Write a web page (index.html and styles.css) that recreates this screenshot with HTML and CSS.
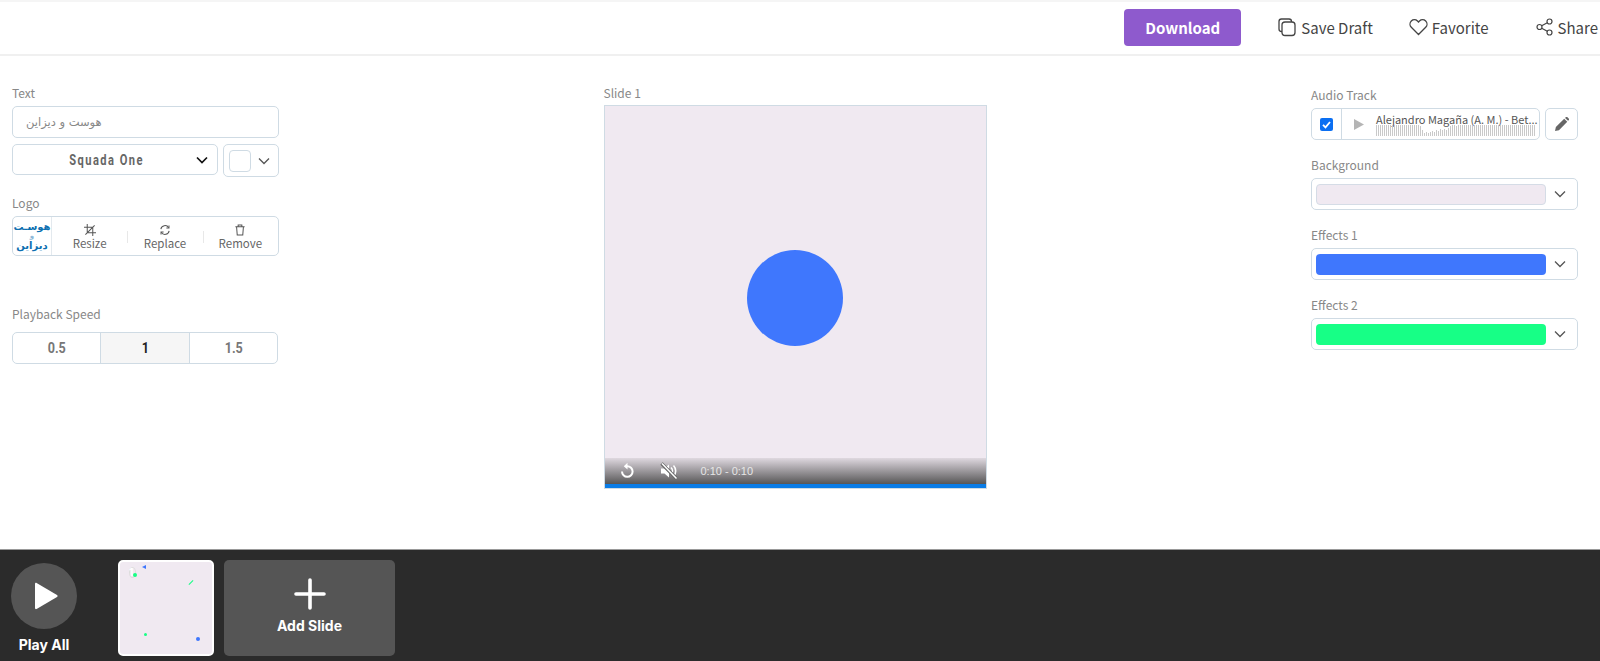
FILE: index.html
```html
<!DOCTYPE html>
<html lang="en">
<head>
  <meta charset="UTF-8">
  <meta name="viewport" content="width=device-width, initial-scale=1.0">
  <title>Slide Editor</title>
  <link rel="stylesheet" href="styles.css">
</head>
<body>
  <header class="topbar">
    <button class="download">Download</button>
    <a class="action">
      <svg width="20" height="20" viewBox="0 0 20 20" fill="none" stroke="#444" stroke-width="1.3"><path d="M5 14.5h-.5A2.5 2.5 0 0 1 2 12V4.500A2.500 2.500 0 0 1 4.500 2H12a2.500 2.500 0 0 1 2.500 2.500V5"/><rect x="5" y="5" width="13" height="13.500" rx="3"/></svg>
      Save Draft
    </a>
    <a class="action">
      <svg width="19" height="18" viewBox="0 0 19 18" fill="none" stroke="#444" stroke-width="1.3"><path d="M9.500 16.500 2.300 9.300a4.500 4.500 0 0 1 0-6.300 4.400 4.400 0 0 1 6.200 0l1 1 1-1a4.400 4.400 0 0 1 6.200 0 4.500 4.500 0 0 1 0 6.300z"/></svg>
      Favorite
    </a>
    <a class="action share">
      <svg width="18" height="18" viewBox="0 0 18 18" fill="none" stroke="#444" stroke-width="1.2"><circle cx="13.500" cy="3.500" r="2.500"/><circle cx="3.500" cy="9" r="2.500"/><circle cx="13.500" cy="14.500" r="2.500"/><path d="m5.700 7.800 5.600-3.100M5.700 10.200l5.600 3.100"/></svg>
      Share
    </a>
  </header>

  <main class="editor">
    <section class="panel">
      <div class="label">Text</div>
      <div class="box text-input" dir="rtl">هوست و دیزاین</div>
      <div class="font-row">
        <div class="box font-select">
          <span class="font-name">Squada One</span>
          <svg class="font-chevron" width="12" height="8" viewBox="0 0 12 8" fill="none" stroke="#111" stroke-width="1.700"><path d="m1 1.500 5 5 5-5"/></svg>
        </div>
        <div class="box color-select">
          <span class="color-chip"></span>
          <svg width="12" height="8" viewBox="0 0 12 8" fill="none" stroke="#555" stroke-width="1.300"><path d="m1 1.500 5 5 5-5"/></svg>
        </div>
      </div>

      <div class="label logo-label">Logo</div>
      <div class="box logo-box">
        <div class="logo-thumb" dir="rtl">
          <span>هوسـت</span>
          <span class="logo-small">و</span>
          <span>دیزاین</span>
        </div>
        <div class="logo-tool">
          <svg width="12" height="12" viewBox="0 0 13 13" fill="none" stroke="#555" stroke-width="1.100"><path d="M3.500 0v9.500H13M0 3.500h9.500V13M1.500 11.500l10-10"/></svg>
          Resize
        </div>
        <div class="logo-tool">
          <svg width="12" height="12" viewBox="0 0 13 13" fill="none" stroke="#555" stroke-width="1.100"><path d="M2 5.500A4.600 4.600 0 0 1 10.500 4M11 7.500A4.600 4.600 0 0 1 2.500 9"/><path d="M10.800 1.500V4.300H8M2.200 11.500V8.700H5"/></svg>
          Replace
        </div>
        <div class="logo-tool">
          <svg width="12" height="12" viewBox="0 0 13 13" fill="none" stroke="#555" stroke-width="1.100"><path d="M1.500 3h10M4.500 3V1h4v2M2.800 3l.7 9h6l.7-9"/></svg>
          Remove
        </div>
      </div>

      <div class="label speed-label">Playback Speed</div>
      <div class="box speed-group">
        <span class="speed"><span class="speed-text">0.5</span></span>
        <span class="speed active"><span class="speed-text">1</span></span>
        <span class="speed"><span class="speed-text">1.5</span></span>
      </div>
    </section>

    <section class="stage">
      <div class="label stage-label">Slide 1</div>
      <div class="slide">
        <div class="circle"></div>
        <div class="video-controls">
          <svg width="18" height="18" viewBox="0 0 18 18" fill="none" stroke="#fff" stroke-width="2"><path d="M4 9.500a5.300 5.300 0 1 0 5.300-5.300H7"/><path d="M9.500 0.800 5.800 4.200l3.700 3.400z" fill="#fff" stroke="none"/></svg>
          <svg class="mute" width="18" height="18" viewBox="0 0 18 18"><path d="M1 6.500h3.500L9 2.500v13l-4.500-4H1z" fill="#fff"/><path d="M11 5.500a5 5 0 0 1 0 7M13.500 3.500a8 8 0 0 1 0 11" fill="none" stroke="#fff" stroke-width="1.600"/><path d="m1.500 1.500 15 15" stroke="#666" stroke-width="3.200"/><path d="m2 1.500 14.500 15" stroke="#fff" stroke-width="1.500"/></svg>
          <span class="video-time">0:10 - 0:10</span>
        </div>
      </div>
    </section>

    <section class="panel">
      <div class="label audio-label">Audio Track</div>
      <div class="audio-row">
        <div class="box audio-box">
          <div class="audio-check">
            <svg width="13" height="13" viewBox="0 0 13 13"><rect width="13" height="13" rx="2" fill="#0b6ff2"/><path d="m3 6.800 2.500 2.500L10 4" fill="none" stroke="#fff" stroke-width="1.800"/></svg>
          </div>
          <svg class="audio-play" width="10" height="11" viewBox="0 0 10 11"><path d="M0 0l10 5.500L0 11z" fill="#b5b5b5"/></svg>
          <div class="audio-info">
            <div class="audio-name">Alejandro Magaña (A. M.) - Bet...</div>
            <svg class="wave" width="160" height="11" viewBox="0 0 160 11" fill="none" stroke="#c9c9c9" stroke-width="1">
              <path d="M.5 0v11M2.500 0v11M4.500 0v11M6.500 0v11M8.500 0v11M10.500 0v11M12.500 0v11M14.500 0v11M16.500 0v11M18.500 0v11M20.500 0v11M22.500 0v11M24.500 0v11M26.500 0v11M28.500 0v11M30.500 0v11M32.500 0v11M34.500 0v11M36.500 0v11M38.500 0v11M40.500 0v11M42.500 0v11M44.500 1v10M46.500 5v6M48.500 8v3M50.500 7v4M52.500 8v3M54.500 7v4M56.500 6v5M58.500 7v4M60.500 5v6M62.500 6v5M64.500 4v7M66.500 5v6M68.500 4v7M70.500 5v6M72.500 3v8M74.500 1v10M76.500 0v11M78.500 0v11M80.500 1v10M82.500 0v11M84.500 0v11M86.500 0v11M88.500 0v11M90.500 0v11M92.500 0v11M94.500 0v11M96.500 0v11M98.500 0v11M100.500 0v11M102.500 0v11M104.500 0v11M106.500 0v11M108.500 0v11M110.500 0v11M112.500 0v11M114.500 0v11M116.500 0v11M118.500 0v11M120.500 0v11M122.500 0v11M124.500 0v11M126.500 0v11M128.500 0v11M130.500 0v11M132.500 0v11M134.500 0v11M136.500 0v11M138.500 0v11M140.500 0v11M142.500 0v11M144.500 0v11M146.500 0v11M148.500 0v11M150.500 0v11M152.500 0v11M154.500 0v11M156.500 0v11M158.500 0v11"/>
            </svg>
          </div>
        </div>
        <div class="box pencil-box">
          <svg width="14" height="14" viewBox="0 0 16 16"><path d="M0 16l1-4.500L10.500 2l3.500 3.500L4.500 15zM11.500 1l1-1c.5-.4 1-.4 1.400 0l2 2c.4.400.4 1 0 1.400l-1 1z" fill="#666"/></svg>
        </div>
      </div>

      <div class="label">Background</div>
      <div class="box swatch-box">
        <span class="swatch swatch-bg"></span>
        <svg width="12" height="8" viewBox="0 0 12 8" fill="none" stroke="#555" stroke-width="1.300"><path d="m1 1.500 5 5 5-5"/></svg>
      </div>

      <div class="label">Effects 1</div>
      <div class="box swatch-box">
        <span class="swatch swatch-blue"></span>
        <svg width="12" height="8" viewBox="0 0 12 8" fill="none" stroke="#555" stroke-width="1.300"><path d="m1 1.500 5 5 5-5"/></svg>
      </div>

      <div class="label">Effects 2</div>
      <div class="box swatch-box">
        <span class="swatch swatch-green"></span>
        <svg width="12" height="8" viewBox="0 0 12 8" fill="none" stroke="#555" stroke-width="1.300"><path d="m1 1.500 5 5 5-5"/></svg>
      </div>
    </section>
  </main>

  <footer class="timeline">
    <div class="play-all">
      <div class="play-circle">
        <svg width="24" height="28" viewBox="0 0 24 28"><path d="M1 2v24c0 1 .8 1.400 1.600 1L23 15c.8-.5.8-1.500 0-2L2.600 1C1.800.600 1 1 1 2z" fill="#fff"/></svg>
      </div>
      <div class="play-text">Play All</div>
    </div>
    <div class="thumb">
      <span class="thumb-ring"></span>
      <span class="thumb-num">1</span>
      <span class="dot dot-a"></span>
      <span class="dot dot-b"></span>
      <span class="dot dot-c"></span>
      <span class="dot dot-d"></span>
      <span class="dot dot-e"></span>
    </div>
    <div class="add-slide">
      <svg width="32" height="32" viewBox="0 0 32 32"><path d="M16 2v28M2 16h28" stroke="#fff" stroke-width="3.600" stroke-linecap="round"/></svg>
      <span>Add Slide</span>
    </div>
  </footer>
</body>
</html>
```

FILE: styles.css
```css
body {
  font-family: "Noto Sans CJK SC", "Noto Sans", sans-serif;
  display: flex;
  flex-direction: column;
  height: 100vh;
  margin: 0;
  color: #444;
  background: #fff;
  overflow: hidden;
}

.topbar {
  display: flex;
  justify-content: flex-end;
  align-items: center;
  gap: 36px;
  height: 50px;
  padding-right: 2px;
  padding-bottom: 2px;
  border-top: 2px solid #f5f5f5;
  border-bottom: 2px solid #f0f0f0;
  box-sizing: content-box;
  font-size: 15px;
}

.download {
  width: 117px;
  height: 37px;
  border: none;
  border-radius: 4px;
  background: #8e5acd;
  color: #fff;
  font-family: inherit;
  font-size: 15px;
  font-weight: 700;
}

.action {
  display: flex;
  align-items: center;
  gap: 4px;
  color: #444;
}

.share {
  margin-left: 11px;
}

.editor {
  flex: 1;
  display: grid;
  grid-template-columns: 267px 383px 267px;
  justify-content: space-between;
  padding: 29px 22px 0 12px;
}

.label {
  height: 16px;
  margin-bottom: 5px;
  font-size: 12px;
  line-height: 16px;
  color: #888;
}

.box {
  box-sizing: border-box;
  border: 1px solid #cfdbe4;
  border-radius: 5px;
  background: #fff;
}

.text-input {
  height: 32px;
  padding-left: 13px;
  font-family: "DejaVu Sans", sans-serif;
  font-size: 11.500px;
  line-height: 30px;
  color: #888;
  text-align: left;
  direction: ltr;
}

.font-row {
  display: flex;
  justify-content: space-between;
  align-items: flex-start;
  margin-top: 6px;
}

.font-select {
  position: relative;
  width: 206px;
  height: 31px;
  padding-right: 16px;
  text-align: center;
  line-height: 27px;
}

.font-name {
  font-family: "Roboto", sans-serif;
  font-size: 15px;
  font-weight: 700;
  letter-spacing: 2px;
  color: #666;
  display: inline-block;
  transform: scaleX(.74);
  white-space: nowrap;
}

.font-chevron {
  position: absolute;
  right: 9px;
  top: 11px;
}

.color-select {
  display: flex;
  align-items: center;
  gap: 7px;
  width: 56px;
  height: 33px;
  padding-left: 5px;
}

.color-chip {
  width: 20px;
  height: 20px;
  border: 1px solid #cfdbe4;
  border-radius: 4px;
}

.logo-label {
  margin-top: 18px;
}

.logo-box {
  display: flex;
  height: 40px;
  overflow: hidden;
}

.logo-thumb {
  display: flex;
  flex-direction: column;
  align-items: center;
  justify-content: center;
  width: 38px;
  flex-shrink: 0;
  border-right: 1px solid #e3e9ee;
  font-family: "DejaVu Sans", sans-serif;
  font-size: 10px;
  font-weight: 700;
  line-height: 12px;
  color: #0d6fb0;
  white-space: nowrap;
}

.logo-small {
  font-size: 7px;
  line-height: 7px;
  opacity: .5;
}

.logo-tool {
  flex: 1;
  display: flex;
  flex-direction: column;
  align-items: center;
  font-size: 11.500px;
  line-height: 15px;
  color: #666;
  padding-top: 7px;
  background: linear-gradient(#e8e8e8, #e8e8e8) left 14px / 1px 12px no-repeat;
}

.logo-tool:nth-child(2) {
  background: none;
}

.speed-label {
  margin-top: 50px;
  margin-bottom: 10px;
}

.speed-group {
  display: flex;
  width: 266px;
  height: 32px;
  overflow: hidden;
}

.speed {
  flex: 1;
  font-family: "Roboto", sans-serif;
  font-size: 15px;
  font-weight: 700;
  line-height: 31px;
  text-align: center;
  color: #777;
}

.speed-text {
  display: inline-block;
  transform: scaleX(.84);
}

.speed.active {
  background: #f6f6f6;
  color: #222;
  border-left: 1px solid #cfdbe4;
  border-right: 1px solid #cfdbe4;
}

.stage-label {
  margin-bottom: 4px;
}

.slide {
  position: relative;
  display: grid;
  place-items: center;
  box-sizing: border-box;
  width: 383px;
  height: 384px;
  padding-top: 1px;
  border: 1px solid #cfdbe4;
  background: #f0e9f1;
}

.circle {
  width: 96px;
  height: 96px;
  border-radius: 50%;
  background: #3f77fd;
}

.video-controls {
  position: absolute;
  left: 0;
  right: 0;
  bottom: 0;
  display: flex;
  align-items: center;
  height: 26px;
  padding-left: 13px;
  border-bottom: 4px solid #0a7ce6;
  background: linear-gradient(rgba(70, 70, 70, .1), rgba(70, 70, 70, .9));
}

.mute {
  margin-left: 24px;
}

.video-time {
  margin-left: 23px;
  font-family: "Liberation Sans", Arial, sans-serif;
  font-size: 11px;
  color: #e6e6e6;
}

.audio-label {
  margin-top: 2px;
}

.audio-row {
  display: flex;
  gap: 5px;
  margin-bottom: 17px;
}

.audio-box {
  display: flex;
  align-items: center;
  width: 229px;
  height: 32px;
  overflow: hidden;
}

.audio-check {
  display: flex;
  align-items: center;
  justify-content: center;
  width: 29px;
  height: 100%;
  flex-shrink: 0;
  border-right: 1px solid #cfdbe4;
}

.audio-play {
  margin-left: 12px;
  flex-shrink: 0;
}

.audio-info {
  margin-left: 12px;
  width: 160px;
}

.audio-name {
  font-size: 11px;
  line-height: 12px;
  white-space: nowrap;
  color: #555;
}

.wave {
  display: block;
}

.pencil-box {
  display: flex;
  align-items: center;
  justify-content: center;
  width: 33px;
  height: 32px;
}

.swatch-box {
  display: flex;
  align-items: center;
  justify-content: space-between;
  height: 32px;
  padding: 0 11px 0 4px;
  margin-bottom: 17px;
}

.swatch {
  width: 230px;
  height: 21px;
  border-radius: 4px;
}

.swatch-bg {
  box-sizing: border-box;
  background: #f0e9f1;
  border: 1px solid #d5dce6;
}

.swatch-blue {
  background: #3f77fd;
}

.swatch-green {
  background: #17ff86;
}

.timeline {
  display: flex;
  align-items: flex-start;
  height: 112px;
  padding: 10px 0 0 11px;
  box-sizing: border-box;
  border-top: 1px solid #999;
  background: #2b2b2b;
  color: #fff;
  font-family: "Inter", sans-serif;
  font-weight: 700;
}

.play-all {
  display: flex;
  flex-direction: column;
  align-items: center;
  width: 66px;
  margin-right: 41px;
}

.play-circle {
  display: flex;
  align-items: center;
  justify-content: center;
  width: 66px;
  height: 66px;
  margin-top: 3px;
  padding-left: 3px;
  box-sizing: border-box;
  border-radius: 50%;
  background: #555;
}

.play-text {
  margin-top: 7px;
  font-size: 14px;
  line-height: 18px;
  white-space: nowrap;
}

.thumb {
  position: relative;
  box-sizing: border-box;
  width: 96px;
  height: 96px;
  margin-right: 10px;
  border: 2px solid #fff;
  border-radius: 5px;
  background: #f0e9f1;
}

.thumb-ring {
  position: absolute;
  left: 9px;
  top: 5px;
  width: 5px;
  height: 9px;
  border: 1px solid #ddd;
  border-radius: 50%;
}

.thumb-num {
  position: absolute;
  left: 9px;
  top: 4px;
  font-size: 10px;
  line-height: 12px;
  color: #fff;
}

.dot {
  position: absolute;
  width: 3px;
  height: 3px;
  border-radius: 50%;
}

.dot-a {
  left: 22px;
  top: 3px;
  border-radius: 0;
  background: #3f77fd;
  clip-path: polygon(100% 0, 100% 100%, 0 50%);
  width: 4px;
  height: 4px;
}

.dot-b {
  left: 13px;
  top: 11px;
  width: 4px;
  height: 4px;
  background: #17ff86;
}

.dot-c {
  left: 68px;
  top: 20px;
  width: 6px;
  height: 1px;
  border-radius: 0;
  background: #17ff86;
  transform: rotate(-45deg);
}

.dot-d {
  left: 24px;
  top: 71px;
  background: #17ff86;
}

.dot-e {
  left: 76px;
  top: 75px;
  width: 4px;
  height: 4px;
  background: #3f77fd;
}

.add-slide {
  display: flex;
  flex-direction: column;
  align-items: center;
  gap: 7px;
  box-sizing: border-box;
  width: 171px;
  height: 96px;
  padding-top: 18px;
  border-radius: 5px;
  background: #555;
  font-size: 14px;
}
```
